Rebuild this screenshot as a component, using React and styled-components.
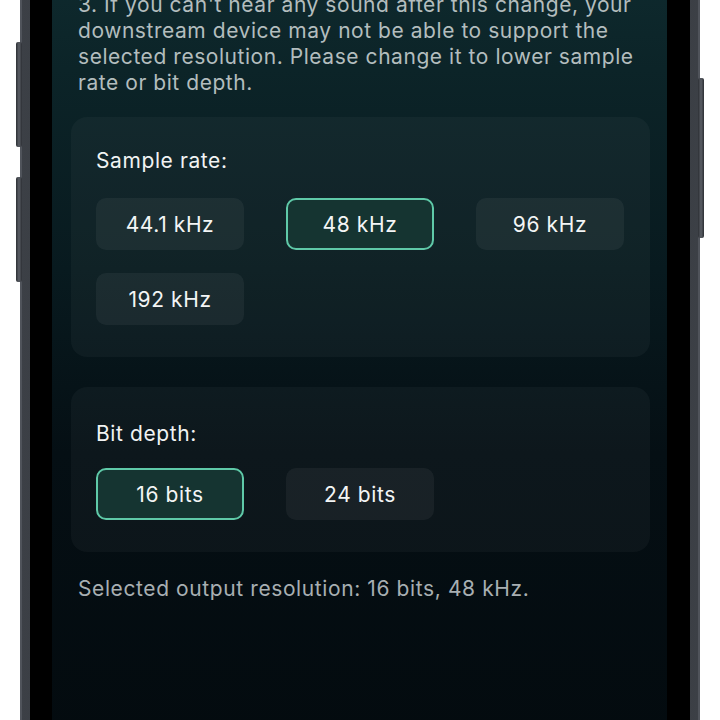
import React from "react";
import styled, { createGlobalStyle } from "styled-components";

const Global = createGlobalStyle`
  html, body { margin: 0; padding: 0; background: #ffffff; }
  body { font-family: Inter, "Noto Sans", "Liberation Sans", sans-serif; }
  * { box-sizing: border-box; }
`;

const Page = styled.div`
  width: 720px;
  height: 720px;
  overflow: hidden;
  background: #ffffff;
`;

const Phone = styled.div`
  position: relative;
  width: 680px;
  height: 900px;
  margin: -80px 0 0 20px;
`;

const SideKey = styled.div`
  position: absolute;
  top: ${(p) => p.$top}px;
  height: ${(p) => p.$height}px;
  width: 6px;
  ${(p) => (p.$right ? "right: -4px;" : "left: -4px;")}
  border-radius: 2px;
  background: linear-gradient(90deg, #2c2f34, #5b5f66 50%, #2c2f34);
`;

const Frame = styled.div`
  height: 100%;
  padding: 10px;
  border-radius: 70px;
  background: linear-gradient(90deg, #3c4046 0%, #2a2d31 40%, #2a2d31 60%, #3c4046 100%);
  box-shadow: inset 2px 0 0 #50545b, inset -2px 0 0 #50545b;
`;

const Bezel = styled.div`
  height: 100%;
  padding: 22px 23px 22px 22px;
  border-radius: 60px;
  background: #000000;
`;

const Screen = styled.div`
  height: 100%;
  border-radius: 42px;
  overflow: hidden;
  padding: 40px 17px 0 19px;
  background: linear-gradient(
    180deg,
    #0f2b2f 0%,
    #0c2428 14%,
    #081a1f 38%,
    #050f14 60%,
    #030a0e 100%
  );
`;

const Note = styled.p`
  margin: 0;
  padding: 0 7px;
  font-size: 21px;
  line-height: 26px;
  letter-spacing: 0.55px;
  color: #b3bdbe;
  white-space: nowrap;
`;

const Card = styled.section`
  margin-top: ${(p) => p.$gap}px;
  padding: ${(p) => p.$top}px 26px 32px 25px;
  border-radius: 16px;
  background: rgba(255, 255, 255, 0.035);
`;

const Label = styled.div`
  font-size: 21px;
  line-height: 24px;
  letter-spacing: 0.6px;
  color: #f1f3f3;
  margin-bottom: ${(p) => p.$gap}px;
`;

const Options = styled.div`
  display: grid;
  grid-template-columns: repeat(3, 148px);
  grid-auto-rows: 52px;
  column-gap: 42px;
  row-gap: 23px;
`;

const Option = styled.button`
  height: 100%;
  border-radius: 10px;
  font-family: inherit;
  font-size: 21px;
  letter-spacing: 0.6px;
  color: #f3f5f5;
  cursor: pointer;
  border: 2px solid ${(p) => (p.$active ? "#5fc9a8" : "transparent")};
  background: ${(p) => (p.$active ? "#153431" : "rgba(255, 255, 255, 0.05)")};
`;

const Summary = styled.p`
  margin: 24px 0 0;
  padding: 0 7px;
  font-size: 21px;
  line-height: 26px;
  letter-spacing: 0.6px;
  color: #a8afb2;
`;

const rates = ["44.1 kHz", "48 kHz", "96 kHz", "192 kHz"];
const depths = ["16 bits", "24 bits"];

export default function App() {
  const [rate, setRate] = React.useState("48 kHz");
  const [depth, setDepth] = React.useState("16 bits");

  return (
    <Page>
      <Global />
      <Phone>
        <SideKey $top={122} $height={105} />
        <SideKey $top={257} $height={105} />
        <SideKey $right $top={158} $height={160} />
        <Frame>
          <Bezel>
            <Screen>
              <Note>
                3. If you can't hear any sound after this change, your
                <br />
                downstream device may not be able to support the
                <br />
                selected resolution. Please change it to lower sample
                <br />
                rate or bit depth.
              </Note>
              <Card $gap={21} $top={32}>
                <Label $gap={25}>Sample rate:</Label>
                <Options>
                  {rates.map((r) => (
                    <Option key={r} $active={r === rate} onClick={() => setRate(r)}>
                      {r}
                    </Option>
                  ))}
                </Options>
              </Card>
              <Card $gap={30} $top={35}>
                <Label $gap={22}>Bit depth:</Label>
                <Options>
                  {depths.map((d) => (
                    <Option key={d} $active={d === depth} onClick={() => setDepth(d)}>
                      {d}
                    </Option>
                  ))}
                </Options>
              </Card>
              <Summary>
                Selected output resolution: {depth}, {rate}.
              </Summary>
            </Screen>
          </Bezel>
        </Frame>
      </Phone>
    </Page>
  );
}
